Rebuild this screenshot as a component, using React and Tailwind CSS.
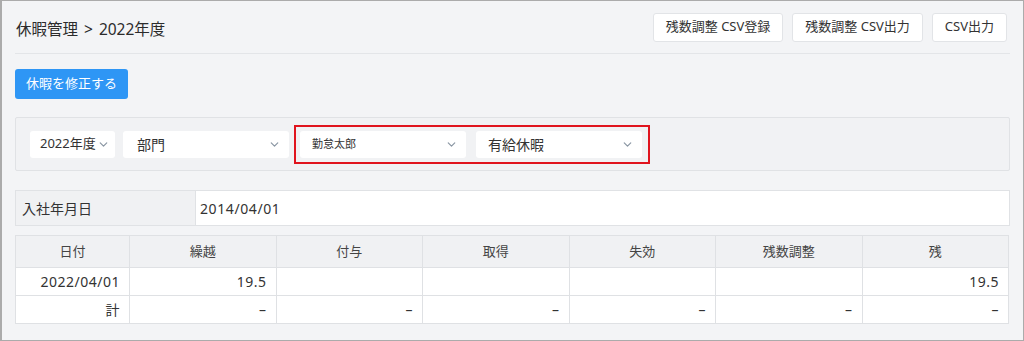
import React from "react";
import { ChevronDown } from "lucide-react";

const font = { fontFamily: '"Noto Sans", "Noto Sans CJK JP", sans-serif' };

const Select = ({ label, className, textSize = "text-[14px]" }) => (
  <div
    className={`flex h-[27px] items-center justify-between whitespace-nowrap rounded-[3px] bg-white text-[#333] ${className} ${textSize}`}
  >
    <span>{label}</span>
    <ChevronDown size={13} strokeWidth={2.2} className="text-[#8a96a3]" />
  </div>
);

const columns = ["日付", "繰越", "付与", "取得", "失効", "残数調整", "残"];
const rows = [
  ["2022/04/01", "19.5", "", "", "", "", "19.5"],
  ["計", "–", "–", "–", "–", "–", "–"],
];

export default function App() {
  return (
    <div
      style={font}
      className="h-[341px] w-[1024px] overflow-hidden border border-l-2 border-[#ababab] bg-[#f3f4f6] text-[#333]"
    >
      <div className="mx-[13px] flex h-[53px] items-center justify-between border-b border-[#e3e5e8] pl-[1px]">
        <h1 className="mt-[6px] flex gap-[6px] text-[15.5px] font-normal text-[#2b2b2b]">
          <span>休暇管理</span>
          <span>&gt;</span>
          <span>2022年度</span>
        </h1>
        <div className="flex gap-[9px] pr-[3px]">
          {["残数調整 CSV登録", "残数調整 CSV出力", "CSV出力"].map((b) => (
            <button
              key={b}
              className="h-[29px] rounded-[3px] border border-[#e2e4e7] bg-white px-[12px] text-[13px] text-[#333]"
            >
              {b}
            </button>
          ))}
        </div>
      </div>

      <div className="mx-[13px] mt-[15px]">
        <button className="h-[30px] rounded-[3px] bg-[#2e96f5] px-[11px] text-[13px] text-white">
          休暇を修正する
        </button>
      </div>

      <div className="mx-[13px] mt-[18px] flex h-[54px] items-center rounded-[2px] border border-[#e0e2e5] bg-[#f1f2f4] pl-[14px]">
        <Select label="2022年度" className="w-[85px] pl-[10px] pr-[5px]" textSize="text-[13px]" />
        <Select label="部門" className="ml-[8px] w-[166px] pl-[14px] pr-[8px]" />
        <div className="ml-[5px] flex h-[39px] items-center gap-[10px] border-2 border-[#e0141e] pl-[4px] pr-[6px]">
          <Select label="勤怠太郎" className="w-[166px] pl-[12px] pr-[8px]" textSize="text-[11px]" />
          <Select label="有給休暇" className="w-[166px] pl-[12px] pr-[8px]" />
        </div>
      </div>

      <div className="mx-[13px] mt-[19px] flex h-[36px] border border-[#e0e2e5] text-[14px]">
        <div className="flex w-[180px] items-center border-r border-[#e0e2e5] bg-[#f0f1f3] pl-[6px]">入社年月日</div>
        <div className="flex flex-1 items-center bg-white pl-[4px] tracking-[0.6px]">2014/04/01</div>
      </div>

      <table className="mx-[13px] mt-[9px] w-[994px] table-fixed border-collapse text-[14px]">
        <colgroup>
          <col className="w-[114px]" />
          {columns.slice(1).map((c) => (
            <col key={c} />
          ))}
        </colgroup>
        <thead>
          <tr className="h-[32px] bg-[#f0f1f3]">
            {columns.map((c) => (
              <th key={c} className="border border-[#dfe1e4] text-[13px] font-normal text-[#444]">
                {c}
              </th>
            ))}
          </tr>
        </thead>
        <tbody>
          {rows.map((r, i) => (
            <tr key={i} className="h-[28px] bg-white">
              {r.map((v, j) => (
                <td key={j} className="border border-[#dfe1e4] pr-[9px] text-right tracking-[0.5px]">
                  {v}
                </td>
              ))}
            </tr>
          ))}
        </tbody>
      </table>
    </div>
  );
}
